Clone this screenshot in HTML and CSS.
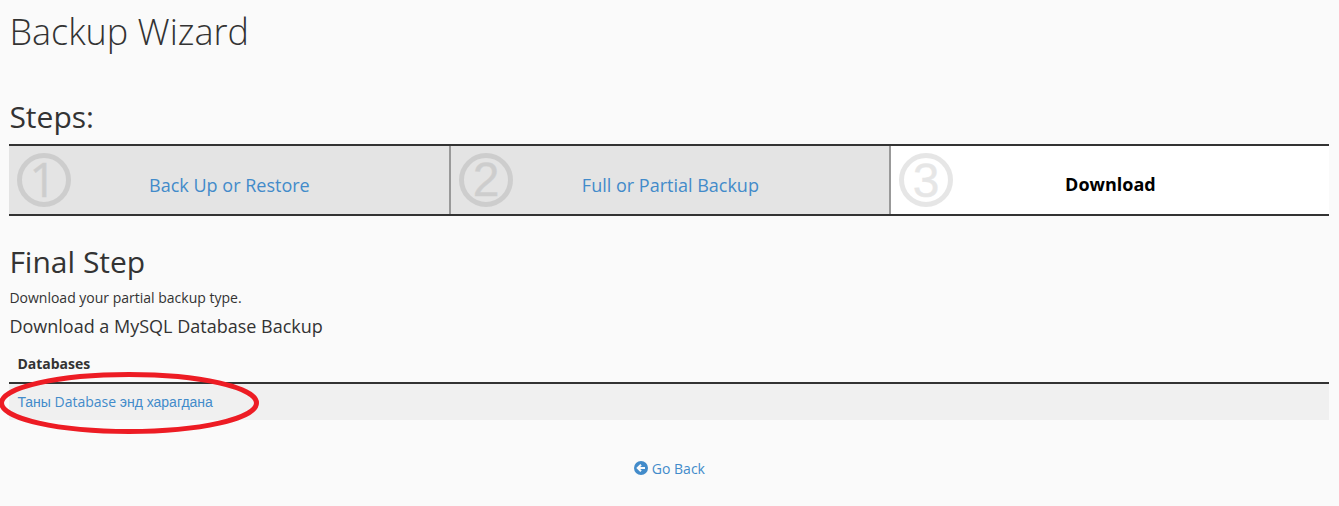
FILE: index.html
```html
<!DOCTYPE html>
<html lang="en">
<head>
    <meta charset="UTF-8">
    <meta name="viewport" content="width=device-width, initial-scale=1.0">
    <title>Backup Wizard</title>
    <link rel="stylesheet" href="styles.css">
</head>
<body>
    <h1>Backup Wizard</h1>

    <h2 class="steps-title">Steps:</h2>
    <div class="steps">
        <div class="step">
            <svg class="step-number" viewBox="0 0 54 54">
                <circle cx="27" cy="27" r="24.5" />
                <text class="one" x="26" y="44">1</text>
            </svg>
            <a href="#">Back Up or Restore</a>
        </div>
        <div class="step">
            <svg class="step-number" viewBox="0 0 54 54">
                <circle cx="27" cy="27" r="24.5" />
                <text x="27" y="43">2</text>
            </svg>
            <a href="#">Full or Partial Backup</a>
        </div>
        <div class="step active">
            <svg class="step-number" viewBox="0 0 54 54">
                <circle cx="27" cy="27" r="24.5" />
                <text x="27" y="44">3</text>
            </svg>
            <span>Download</span>
        </div>
    </div>

    <h2 class="final-title">Final Step</h2>
    <p>Download your partial backup type.</p>
    <h4>Download a MySQL Database Backup</h4>

    <div class="table-wrap">
        <table>
            <thead>
                <tr><th>Databases</th></tr>
            </thead>
            <tbody>
                <tr><td><a href="#"><span lang="mn">Таны</span> Database <span lang="mn">энд харагдана</span></a></td></tr>
            </tbody>
        </table>
        <svg class="highlight" viewBox="0 0 260 64">
            <ellipse cx="129" cy="32" rx="127.5" ry="28.5" />
        </svg>
    </div>

    <div class="go-back">
        <a href="#">
            <svg class="back-icon" viewBox="0 0 14 14">
                <circle cx="7" cy="7" r="7" />
                <path d="M11 7H4M7 3.7L3.7 7L7 10.3" />
            </svg>
            <span>Go Back</span>
        </a>
    </div>
</body>
</html>
```

FILE: styles.css
```css
body {
    margin: 0;
    padding: 0 9.6px 0 9.4px;
    font-family: 'Open Sans', sans-serif;
    font-size: 14px;
    line-height: 20px;
    color: #333;
    background: #fafafa;
    overflow: hidden;
}

a {
    color: #428bca;
    text-decoration: none;
}

h1, h2, h4, p {
    margin: 0;
}

h1 {
    padding-top: 12px;
    font-size: 36px;
    font-weight: 300;
    line-height: 40px;
}

h2 {
    font-size: 30px;
    font-weight: 400;
    line-height: 34px;
}

.steps-title {
    margin-top: 48px;
    margin-bottom: 10px;
}

.steps {
    display: grid;
    grid-template-columns: repeat(3, 1fr);
    height: 68px;
    border-top: 2px solid #333;
    border-bottom: 2px solid #333;
}

.step {
    position: relative;
    display: flex;
    align-items: center;
    justify-content: center;
    padding-top: 10px;
    box-sizing: border-box;
    font-size: 18px;
    background: #e4e4e4;
}

.step + .step {
    border-left: 2px solid #999;
}

.step.active {
    padding-top: 8px;
    font-weight: 700;
    color: #000;
    background: #fff;
}

.step-number {
    position: absolute;
    top: 7px;
    left: 8px;
    width: 54px;
    height: 54px;
    overflow: visible;
    opacity: 0.095;
}

.step-number circle {
    fill: none;
    stroke: #000;
    stroke-width: 5;
}

.step-number text {
    font-family: 'Liberation Sans', Arial, sans-serif;
    font-size: 48px;
    font-weight: 400;
    text-anchor: middle;
    stroke: #000;
    stroke-width: 0.5;
}

.step-number .one {
    font-family: 'Open Sans', sans-serif;
}

.final-title {
    margin-top: 29px;
}

p {
    margin-top: 9px;
}

h4 {
    margin-top: 8px;
    font-size: 18px;
    font-weight: 400;
    line-height: 20px;
}

.table-wrap {
    position: relative;
    margin-top: 10px;
}

table {
    width: 100%;
    border-collapse: separate;
    border-spacing: 0;
}

th {
    height: 36px;
    padding: 0 8px;
    text-align: left;
    font-weight: 700;
    border-bottom: 2px solid #333;
}

td {
    height: 36px;
    padding: 0 8px;
    background: #f0f0f0;
}

td span {
    font-family: 'Liberation Sans', Arial, sans-serif;
}

/* red marker around the database row */
.highlight {
    position: absolute;
    top: 25px;
    left: -9.4px;
    width: 260px;
    height: 64px;
    pointer-events: none;
}

.highlight ellipse {
    fill: none;
    stroke: #ed1c24;
    stroke-width: 5;
}

.go-back {
    margin-top: 39px;
    text-align: center;
}

.go-back a {
    display: inline-flex;
    align-items: center;
    gap: 4px;
}

.back-icon {
    width: 14px;
    height: 14px;
    margin-bottom: 2px;
}

.back-icon circle {
    fill: #428bca;
}

.back-icon path {
    fill: none;
    stroke: #fafafa;
    stroke-width: 2;
}
```
